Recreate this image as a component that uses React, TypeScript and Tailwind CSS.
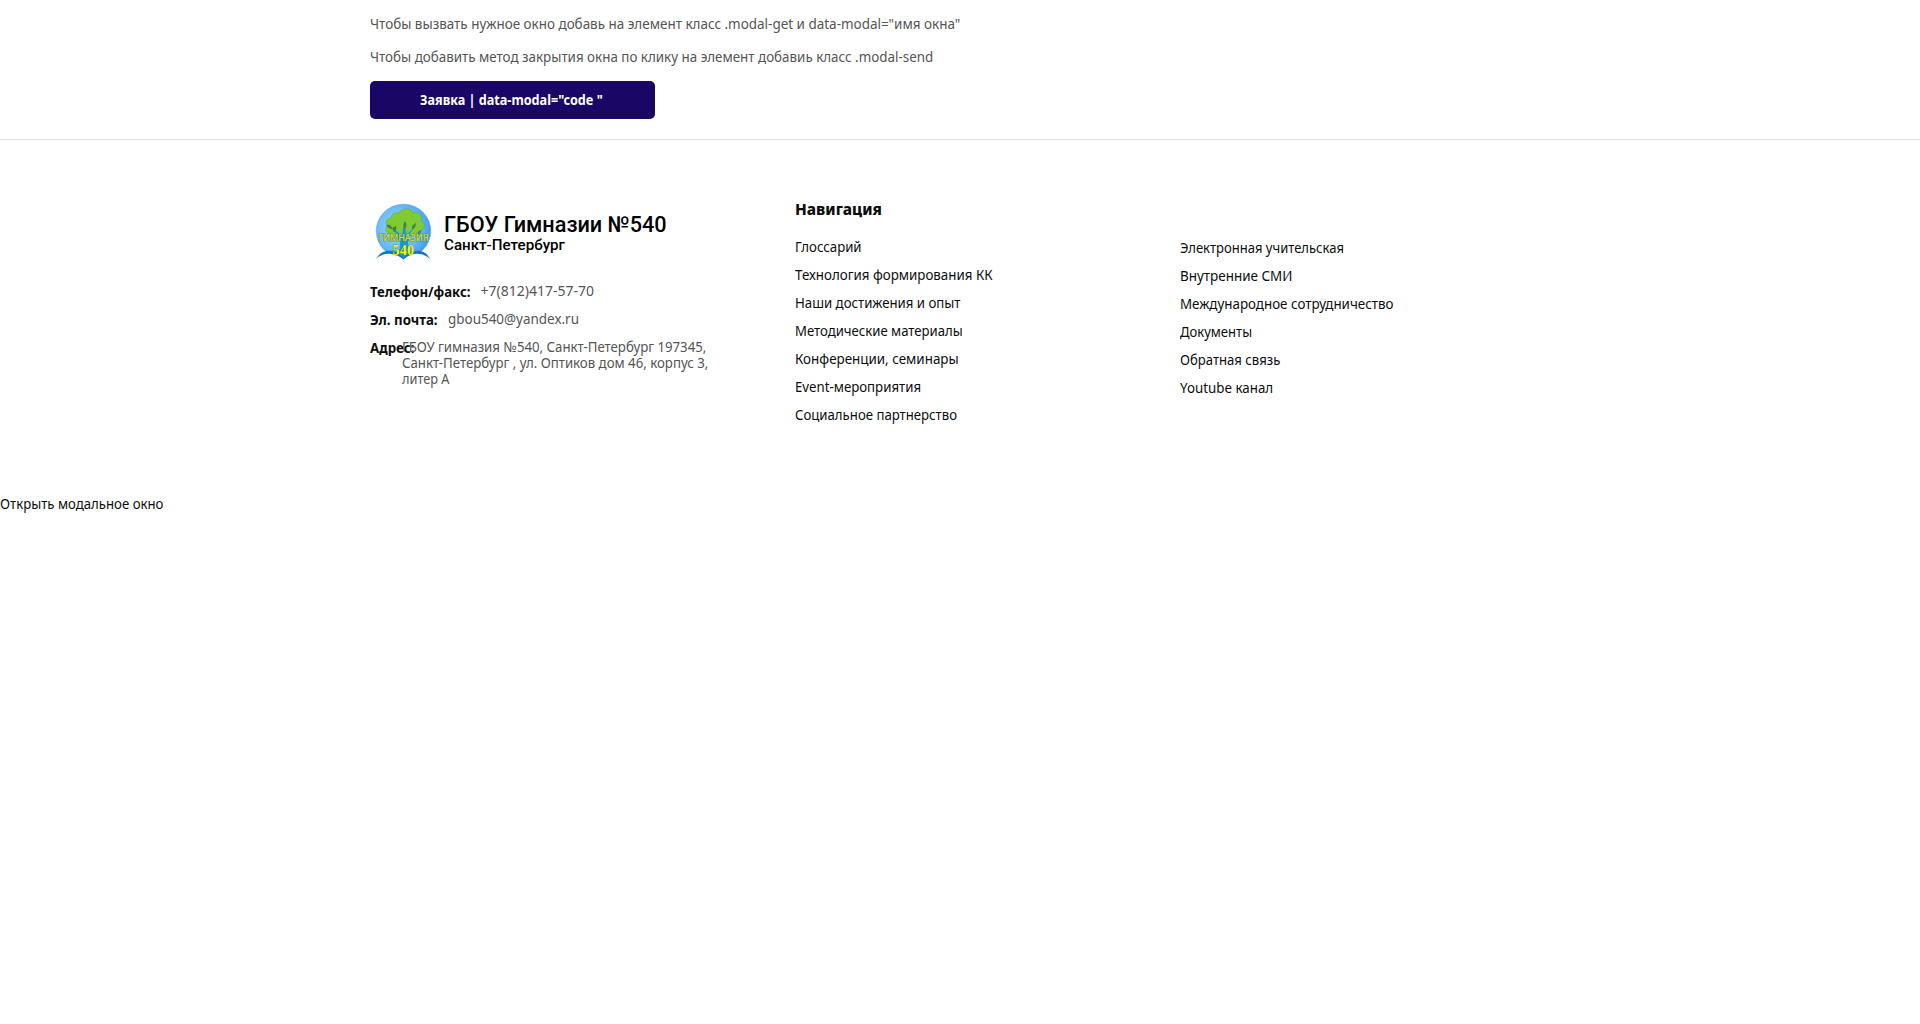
import type { ReactNode } from "react";
import clsx from "clsx";

function Text({ children, className }: { children: ReactNode; className: string }) {
  return <span className={clsx("inline-block origin-left whitespace-pre", className)}>{children}</span>;
}

const primaryLinks: [string, string][] = [
  ["Глоссарий", "scale-x-[0.88]"],
  ["Технология формирования КК", "scale-x-[0.889]"],
  ["Наши достижения и опыт", "scale-x-[0.881]"],
  ["Методические материалы", "scale-x-[0.876]"],
  ["Конференции, семинары", "scale-x-[0.893]"],
  ["Event-мероприятия", "scale-x-[0.882]"],
  ["Социальное партнерство", "scale-x-[0.879]"],
];

const secondaryLinks: [string, string][] = [
  ["Электронная учительская", "scale-x-[0.868]"],
  ["Внутренние СМИ", "scale-x-[0.896]"],
  ["Международное сотрудничество", "scale-x-[0.891]"],
  ["Документы", "scale-x-[0.870]"],
  ["Обратная связь", "scale-x-[0.874]"],
  ["Youtube канал", "scale-x-[0.89]"],
];

const addressLines: [string, string][] = [
  ["ГБОУ гимназия №540, Санкт-Петербург 197345,", "scale-x-[0.945]"],
  ["Санкт-Петербург , ул. Оптиков дом 46, корпус 3,", "scale-x-[0.945]"],
  ["литер А", "scale-x-[0.91]"],
];

function LinkList({ links }: { links: [string, string][] }) {
  return (
    <ul className="flex flex-col gap-2">
      {links.map(([label, scale]) => (
        <li key={label} className="h-5">
          <a href="#">
            <Text className={scale}>{label}</Text>
          </a>
        </li>
      ))}
    </ul>
  );
}

function Emblem() {
  return (
    <svg viewBox="0 0 66 66" className="h-[66px] w-[66px] shrink-0">
      <defs>
        <radialGradient id="sky" cx="0.4" cy="0.45" r="0.62">
          <stop offset="0" stopColor="#a5d8ff" />
          <stop offset="0.6" stopColor="#6fbcfa" />
          <stop offset="1" stopColor="#3d9bee" />
        </radialGradient>
      </defs>
      <ellipse cx="33.5" cy="33" rx="27.3" ry="26.8" fill="url(#sky)" stroke="#5a9fd6" strokeWidth="0.5" />
      <path d="M0 62C9 53 24 52 33.500 61C43 52 58 53 66 62V66H0Z" fill="#fff" />
      <path
        d="M29.500 55L30 44C27 39 24 35 21 30L23 29L32 38L33.500 27H35.500L36 37L45 28L47 29C43 34 39 39 38 44L39 55Z"
        fill="#1599d6"
      />
      <path
        d="M20 36C15 35 14 30 18 28C14 24 17 20 21 20C22 14 27 15 29 15C31 10 42 9 43 15C49 13 53 18 51 23C56 25 55 32 51 32C52 36 47 38 44 36L38 38L45 28L44 27L36 36L35.500 27H33.500L32 37L24 29L22 30L28 38C25 39 22 39 20 36Z"
        fill="#80cb33"
        stroke="#5aa53a"
        strokeWidth="0.5"
      />
      <g fill="#45833b">
        <path d="M16 27C20 26 22 28 22.500 31C19 31 17 29 16 27Z" />
        <path d="M26 28C22 29 22 32 24 34C26 33 27 30 26 28Z" />
        <path d="M35 23C33 26 33 29 35 31C37 29 37 26 35 23Z" />
        <path d="M46 25C42 27 41 30 42.500 31.500C45 30 46 28 46 25Z" />
        <path d="M51 32C48 33 47 35 48.500 36.500C50 35.500 51 34 51 32Z" />
      </g>
      <path
        d="M6 61C12 50 25 51 33.500 59C42 51 55 50 60 61C53 54 41 54 33.500 61.500C25 54 13 54 6 61Z"
        fill="#1675c7"
      />
      <path d="M28 53C30 49 37 49 39 53L33.500 60Z" fill="#1599d6" />
      <text
        x="8.500"
        y="42.500"
        textLength="50"
        lengthAdjust="spacingAndGlyphs"
        fontFamily="Noto Sans, sans-serif"
        fontSize="9"
        fontWeight="500"
        fill="#d5dc32"
        stroke="#4b9062"
        strokeWidth="0.9"
        paintOrder="stroke"
      >
        ГИМНАЗИЯ
      </text>
      <text
        x="22.500"
        y="57"
        textLength="21.500"
        lengthAdjust="spacing"
        fontFamily="Liberation Serif, serif"
        fontSize="14"
        fontWeight="700"
        fill="#fff000"
        stroke="#25846c"
        strokeWidth="0.6"
        paintOrder="stroke"
      >
        540
      </text>
    </svg>
  );
}

export default function App() {
  return (
    <div className="bg-white font-['Noto_Sans',sans-serif] text-[15px] leading-5 text-[#0d0d0d]">
      <section className="flex h-[139px] flex-col items-start pl-[370px] pt-[13px] text-[#555]">
        <p className="h-5">
          <Text className="scale-x-[0.896]">Чтобы вызвать нужное окно добавь на элемент класс .modal-get и data-modal="имя окна"</Text>
        </p>
        <p className="mt-[13px] h-5">
          <Text className="scale-x-[0.892]">Чтобы добавить метод закрытия окна по клику на элемент добавиь класс .modal-send</Text>
        </p>
        <button className="mt-[15px] flex h-[38px] w-[285px] items-center rounded-[5px] bg-[#1a0664] pb-[2px] pl-[50px] font-bold text-white">
          <Text className="scale-x-[0.842]">{'Заявка | data-modal="code "'}</Text>
        </button>
      </section>

      <footer className="flex h-[354px] border-t border-[#e1e1e1] pl-[370px]">
        <div className="w-[425px] pt-[58px]">
          <div className="flex h-[83px]">
            <Emblem />
            <div className="ml-[7.5px] pt-[14px] font-['Roboto',sans-serif] font-medium text-black">
              <p className="h-[23px] text-[22px] leading-[26px]">
                <Text className="scale-x-[0.985]">ГБОУ Гимназии №540</Text>
              </p>
              <p className="h-5">
                <Text className="scale-x-[1.01]">Санкт-Петербург</Text>
              </p>
            </div>
          </div>
          <dl className="flex flex-col gap-2">
            <div className="flex h-5">
              <dt className="w-[110.5px] font-bold">
                <Text className="scale-x-[0.877]">Телефон/факс:</Text>
              </dt>
              <dd className="text-sm leading-[19px] text-[#555]">
                <Text className="">+7(812)417-57-70</Text>
              </dd>
            </div>
            <div className="flex h-5">
              <dt className="w-[78px] font-bold">
                <Text className="scale-x-[0.885]">Эл. почта:</Text>
              </dt>
              <dd className="text-sm leading-[19px] text-[#555]">
                <Text className="scale-x-[0.96]">gbou540@yandex.ru</Text>
              </dd>
            </div>
            <div className="flex">
              <dt className="w-8 font-bold">
                <Text className="scale-x-[0.885]">Адрес:</Text>
              </dt>
              <dd className="pt-[2px] text-sm leading-4 text-[#555]">
                {addressLines.map(([line, scale]) => (
                  <div key={line} className="h-4">
                    <Text className={scale}>{line}</Text>
                  </div>
                ))}
              </dd>
            </div>
          </dl>
        </div>
        <nav className="flex pt-[59px]">
          <div className="w-[385px]">
            <h3 className="mb-[17px] h-5 text-[15px] leading-5 font-extrabold">
              <Text className="scale-x-[1.02]">Навигация</Text>
            </h3>
            <LinkList links={primaryLinks} />
          </div>
          <div className="pt-[38px]">
            <LinkList links={secondaryLinks} />
          </div>
        </nav>
      </footer>

      <a href="#" className="block h-5">
        <Text className="scale-x-[0.879]">Открыть модальное окно</Text>
      </a>
    </div>
  );
}
